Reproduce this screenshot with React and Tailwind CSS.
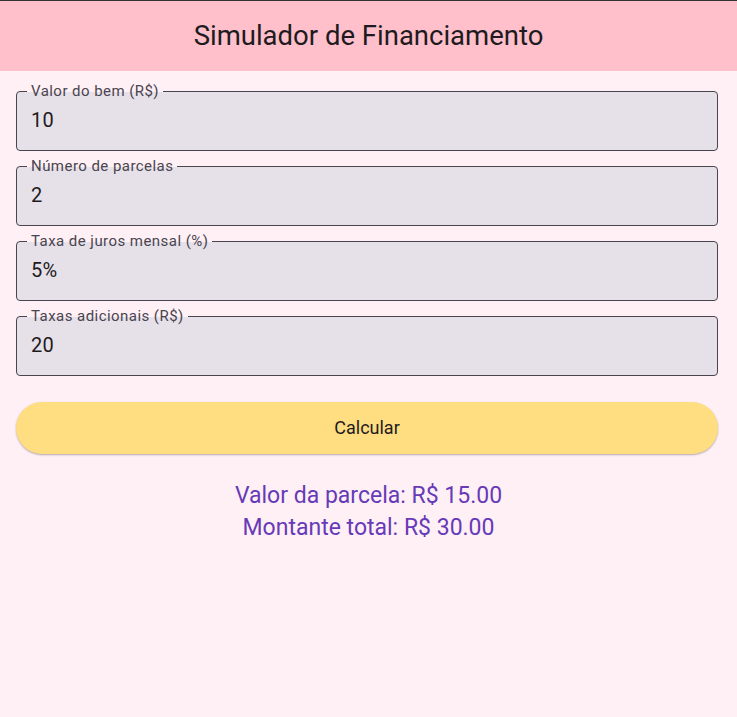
import React from "react";

const fields = [
  { label: "Valor do bem (R$)", value: "10" },
  { label: "Número de parcelas", value: "2" },
  { label: "Taxa de juros mensal (%)", value: "5%" },
  { label: "Taxas adicionais (R$)", value: "20" },
];

function Field({ label, value }) {
  return (
    <div className="relative h-[60px] rounded-[4px] border border-[#49454F] bg-[#E6E0E9] flex items-center pl-[14px] pb-[2px]">
      <span className="absolute left-[10px] top-[-10px] px-[4px] text-[15px] leading-[18px] tracking-[0.45px] text-[#49454F] bg-[linear-gradient(to_bottom,#FFF0F5_55%,#E6E0E9_55%)]">
        {label}
      </span>
      <span className="text-[20px] leading-[24px] text-[#1D1B20] tracking-[0.3px]">{value}</span>
    </div>
  );
}

export default function App() {
  return (
    <div className="min-h-[717px] bg-[#FFF0F5] font-['Roboto',sans-serif]">
      <div className="h-[71px] border-t border-[#333333] bg-[#FFC0CB] flex items-center justify-center">
        <h1 className="text-[27.5px] leading-[32px] text-[#1D1B20]">Simulador de Financiamento</h1>
      </div>
      <div className="pl-4 pr-[19px] pt-[20px] flex flex-col gap-[15px]">
        {fields.map((f) => (
          <Field key={f.label} label={f.label} value={f.value} />
        ))}
      </div>
      <div className="pl-4 pr-[19px] mt-[26px]">
        <button className="w-full h-[52px] rounded-full bg-[#FFDE82] shadow-[0_1px_2px_rgba(0,0,0,0.3)] text-[18px] text-[#1D1B20] pb-[1px]">
          Calcular
        </button>
      </div>
      <div className="mt-[26px] flex flex-col items-center text-[23px] leading-[32px] text-[#673AB7]">
        <p>Valor da parcela: R$ 15.00</p>
        <p>Montante total: R$ 30.00</p>
      </div>
    </div>
  );
}
